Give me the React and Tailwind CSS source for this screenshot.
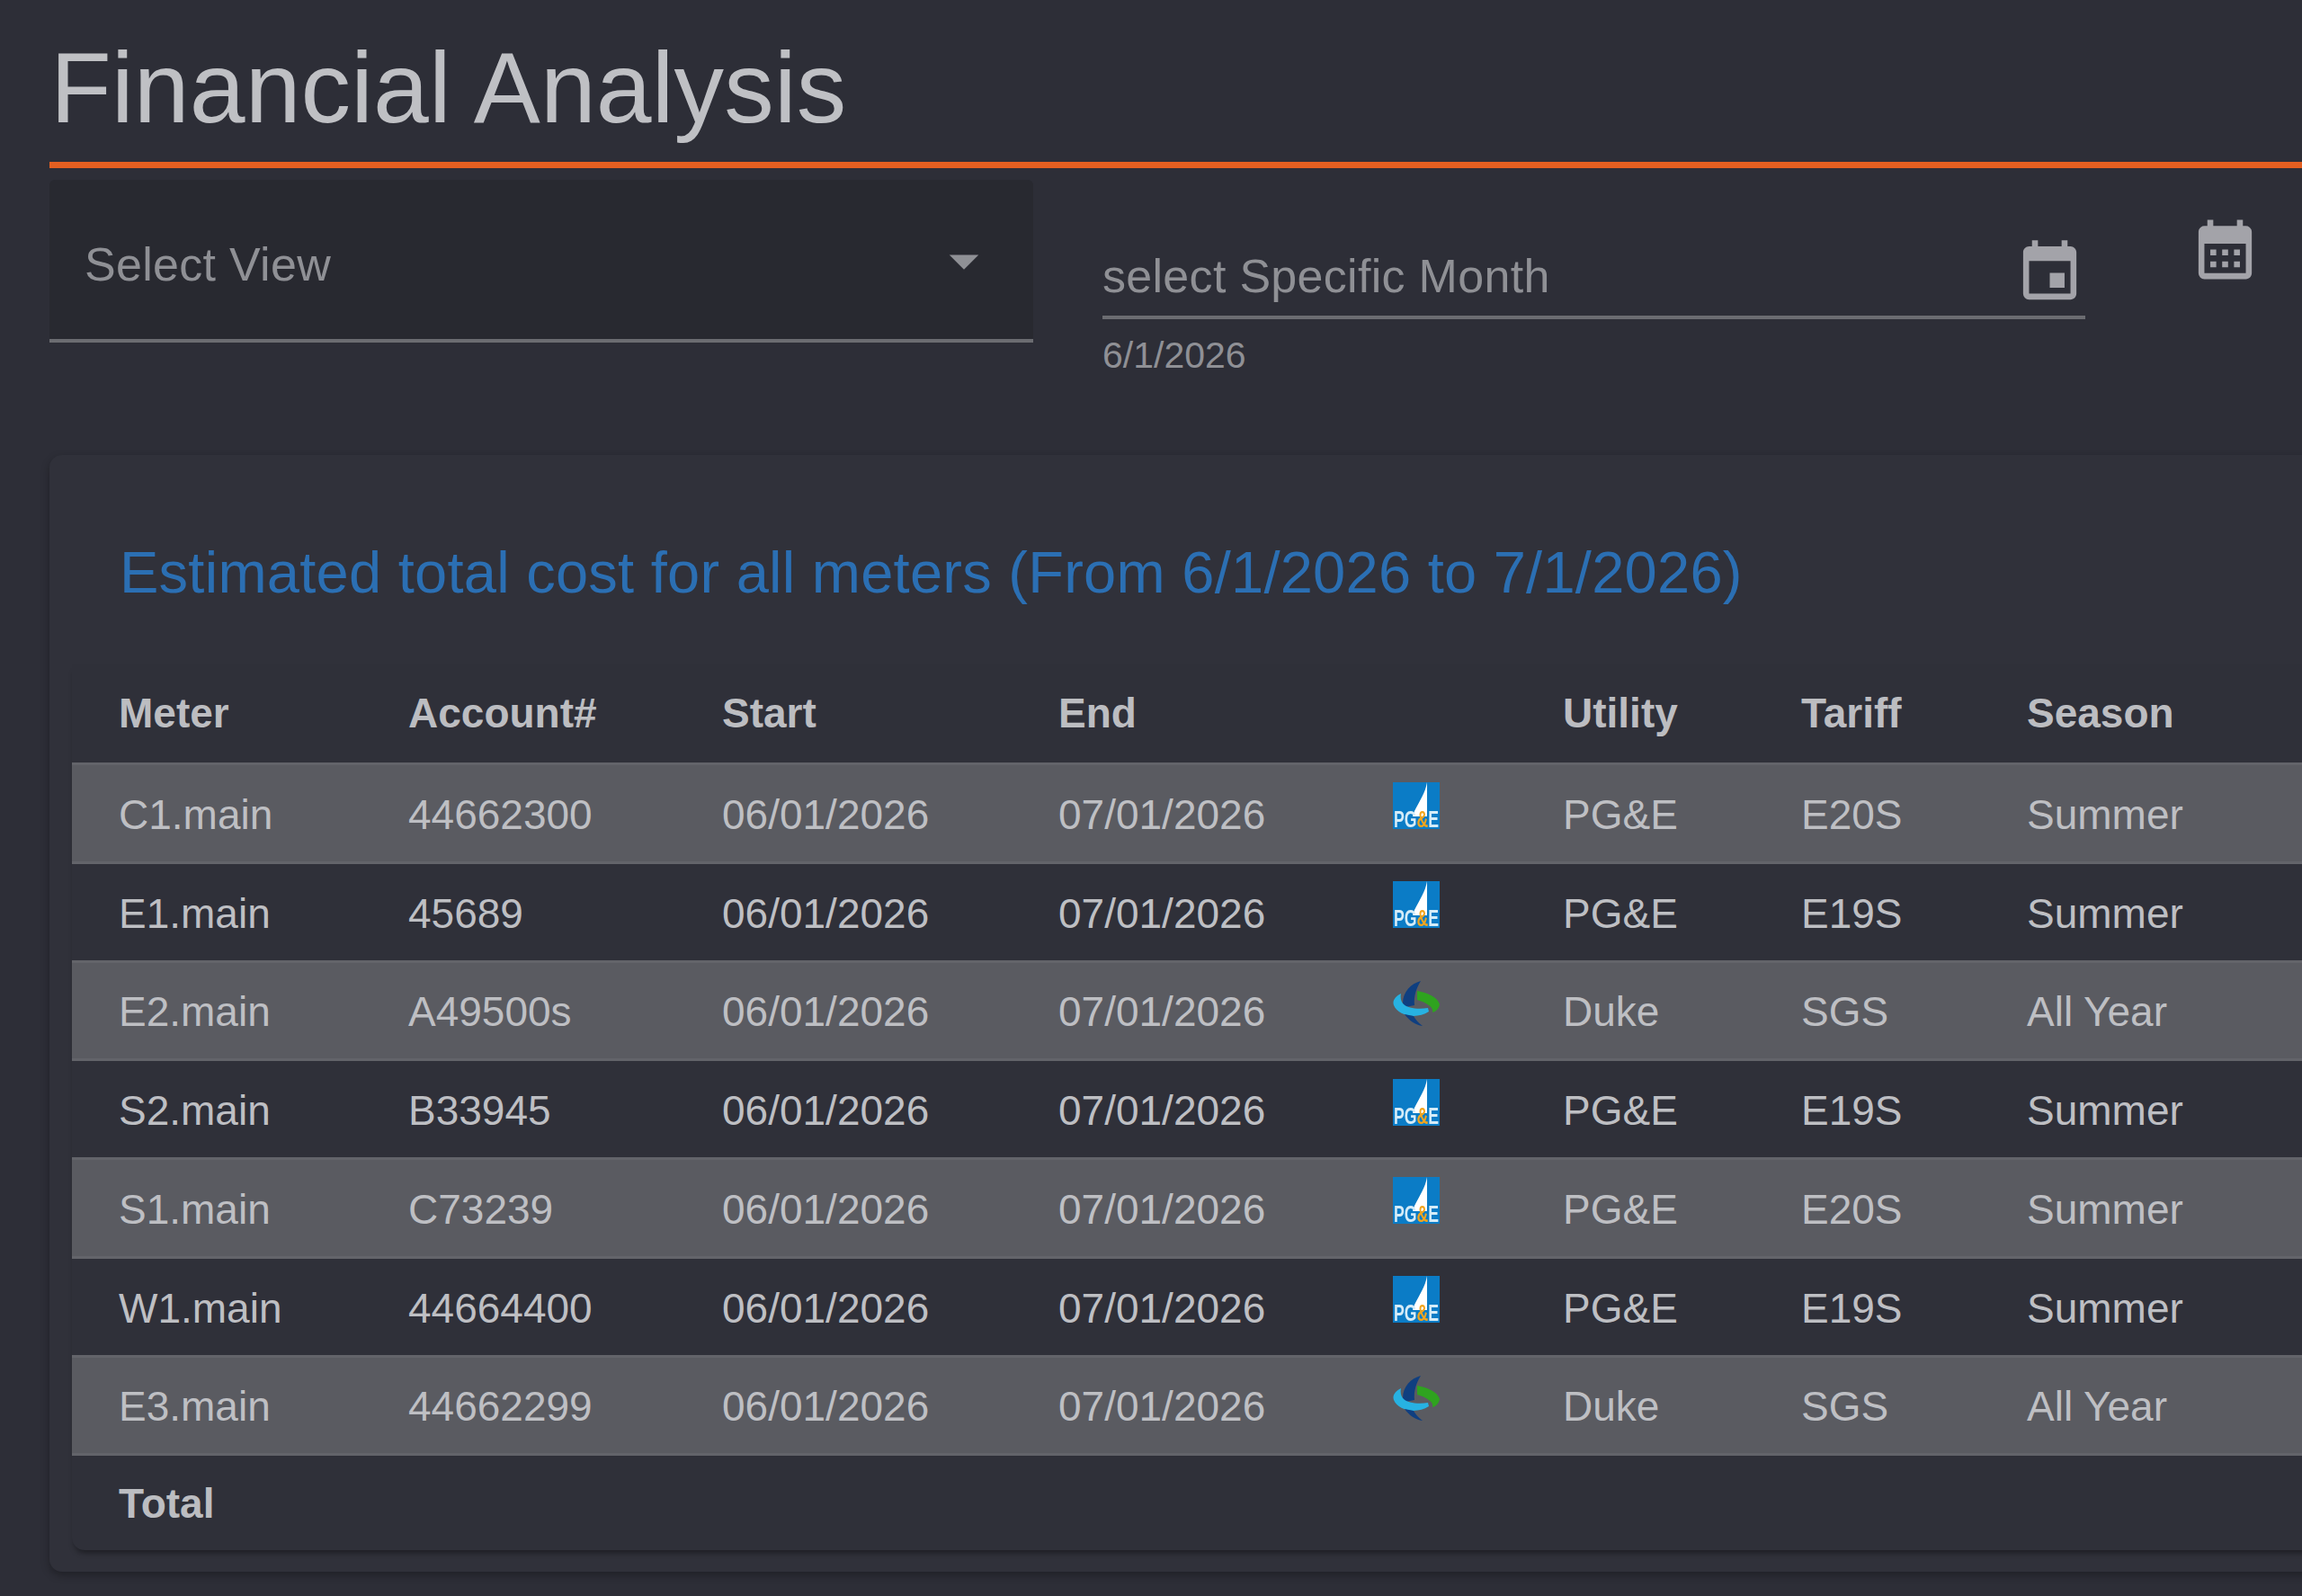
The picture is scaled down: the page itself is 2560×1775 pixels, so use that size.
import React from 'react';
import { MdArrowDropDown, MdEvent, MdCalendarMonth } from 'react-icons/md';

const meters = [
  { meter: 'C1.main', account: '44662300', utility: 'PG&E', tariff: 'E20S', season: 'Summer' },
  { meter: 'E1.main', account: '45689', utility: 'PG&E', tariff: 'E19S', season: 'Summer' },
  { meter: 'E2.main', account: 'A49500s', utility: 'Duke', tariff: 'SGS', season: 'All Year' },
  { meter: 'S2.main', account: 'B33945', utility: 'PG&E', tariff: 'E19S', season: 'Summer' },
  { meter: 'S1.main', account: 'C73239', utility: 'PG&E', tariff: 'E20S', season: 'Summer' },
  { meter: 'W1.main', account: '44664400', utility: 'PG&E', tariff: 'E19S', season: 'Summer' },
  { meter: 'E3.main', account: '44662299', utility: 'Duke', tariff: 'SGS', season: 'All Year' }
];

const headers = ['Meter', 'Account#', 'Start', 'End', '', 'Utility', 'Tariff', 'Season'];

const PgeLogo = () => (
  <svg width="52" height="52" viewBox="0 0 52 52" overflow="visible" className="block blur-[0.6px]">
    <rect width="52" height="52" fill="#0b7cc6" />
    <path d="M38 0 C36 12 30 20 24 32 L22 38 L38 38 C38 24 38 12 38 0Z" fill="#ffffff" />
    <text transform="translate(1 50) scale(0.68 1)" fontSize="26" fontWeight="700" fontFamily="'Liberation Sans', sans-serif" fill="#d5ecf8">
      PG<tspan fill="#f3a51d">&amp;</tspan>E
    </text>
  </svg>
);

const DukeLogo = () => (
  <svg width="52" height="50" viewBox="0 0 52 50" className="block blur-[0.6px]">
    <path d="M31 0 C20 3 11 12 11 25 L14 29 L24 27 C23 17 26 8 31 0Z" fill="#0f3f80" />
    <path d="M27 11 C38 13 50 18 52 26 C51 31 48 34 44 35 C46 29 37 24 27 21Z" fill="#2fa31f" />
    <path d="M9 14 C3 17 -1 22 1 27 C6 39 26 43 40 34 L39 30 C28 32 16 30 12 26 C9 23 8 19 9 14Z" fill="#27b2e2" />
    <path d="M13 37 C18 44 25 49 33 50 C28 46 25 43 23 39Z" fill="#0f3f80" />
  </svg>
);

const App = () => {
  return (
    <div className="w-[2560px] h-[1775px] overflow-hidden bg-[#2d2e37] font-['Liberation_Sans',sans-serif]">
      <div className="w-[2700px] pl-[55px]">
        <h1 className="h-[180px] pt-[36px] ml-[1px] text-[111px] leading-[124px] tracking-[0.18px] font-normal text-[#bfc0c4]">
          Financial Analysis
        </h1>
        <div className="h-[7px] bg-[#e35f21]" />

        <div className="flex items-start h-[319px] pt-[13px]">
          <div className="flex items-center justify-between w-[1094px] h-[181px] pl-[39px] pr-[38px] pt-[3px] bg-[#282930] border-b-[4px] border-[#6b6c71] rounded-t-[6px]">
            <span className="pt-[8px] text-[52px] leading-[60px] tracking-[0.3px] text-[#8f9095]">Select View</span>
            <MdArrowDropDown size={78} className="text-[#8f9095]" />
          </div>

          <div className="w-[1093px] ml-[77px] pt-[66px]">
            <div className="flex items-center justify-between h-[89px] pb-[10px] border-b-[4px] border-[#6b6c71]">
              <span className="pt-[6px] text-[52px] leading-[60px] tracking-[0.3px] text-[#8f9095]">select Specific Month</span>
              <MdEvent size={79} className="text-[#a3a3a9]" />
            </div>
            <p className="mt-[16px] text-[41px] leading-[48px] text-[#8f9095]">6/1/2026</p>
          </div>

          <MdCalendarMonth size={79} className="ml-[116px] mt-[38px] text-[#a3a3a9]" />
        </div>

        <div className="h-[1242px] pl-[25px] bg-[#30313a] rounded-[14px] shadow-[0_4px_10px_rgba(0,0,0,0.3)]">
          <h2 className="h-[233px] pt-[91px] pl-[53px] text-[65px] leading-[80px] tracking-[0.26px] font-normal text-[#2b6fb3] whitespace-nowrap">
            Estimated total cost for all meters (From 6/1/2026 to 7/1/2026)
          </h2>

          <div className="rounded-b-[14px] bg-[#2f3039] shadow-[0_6px_6px_-3px_rgba(0,0,0,0.4)] overflow-hidden">
            <table className="w-[2620px] table-fixed border-separate border-spacing-0 text-[46px]">
              <colgroup>
                <col className="w-[322px]" />
                <col className="w-[349px]" />
                <col className="w-[374px]" />
                <col className="w-[372px]" />
                <col className="w-[189px]" />
                <col className="w-[265px]" />
                <col className="w-[251px]" />
                <col className="w-[498px]" />
              </colgroup>
              <thead>
                <tr>
                  {headers.map((header, i) => (
                    <th
                      key={i}
                      className="h-[112px] pl-[52px] text-left font-bold text-[#bcbdc1] border-b-[3px] border-[#63646a] whitespace-nowrap"
                    >
                      {header}
                    </th>
                  ))}
                </tr>
              </thead>
              <tbody>
                {meters.map((row, i) => {
                  const cells = [row.meter, row.account, '06/01/2026', '07/01/2026', null, row.utility, row.tariff, row.season];
                  return (
                    <tr key={row.meter} className={i % 2 === 0 ? 'bg-[#5a5b61]' : 'bg-[#2f3039]'}>
                      {cells.map((cell, j) => (
                        <td
                          key={j}
                          className="h-[109.75px] pl-[52px] pt-[4px] text-[#bebfc3] border-b-[3px] border-[#63646a] whitespace-nowrap"
                        >
                          {j === 4 ? (
                            <div className="pb-[20px]">{row.utility === 'Duke' ? <DukeLogo /> : <PgeLogo />}</div>
                          ) : (
                            cell
                          )}
                        </td>
                      ))}
                    </tr>
                  );
                })}
                <tr>
                  <td className="h-[105px] pl-[52px] pt-[2px] font-bold text-[#bcbdc1]">Total</td>
                  <td colSpan={7} />
                </tr>
              </tbody>
            </table>
          </div>
        </div>
      </div>
    </div>
  );
};

export default App;
